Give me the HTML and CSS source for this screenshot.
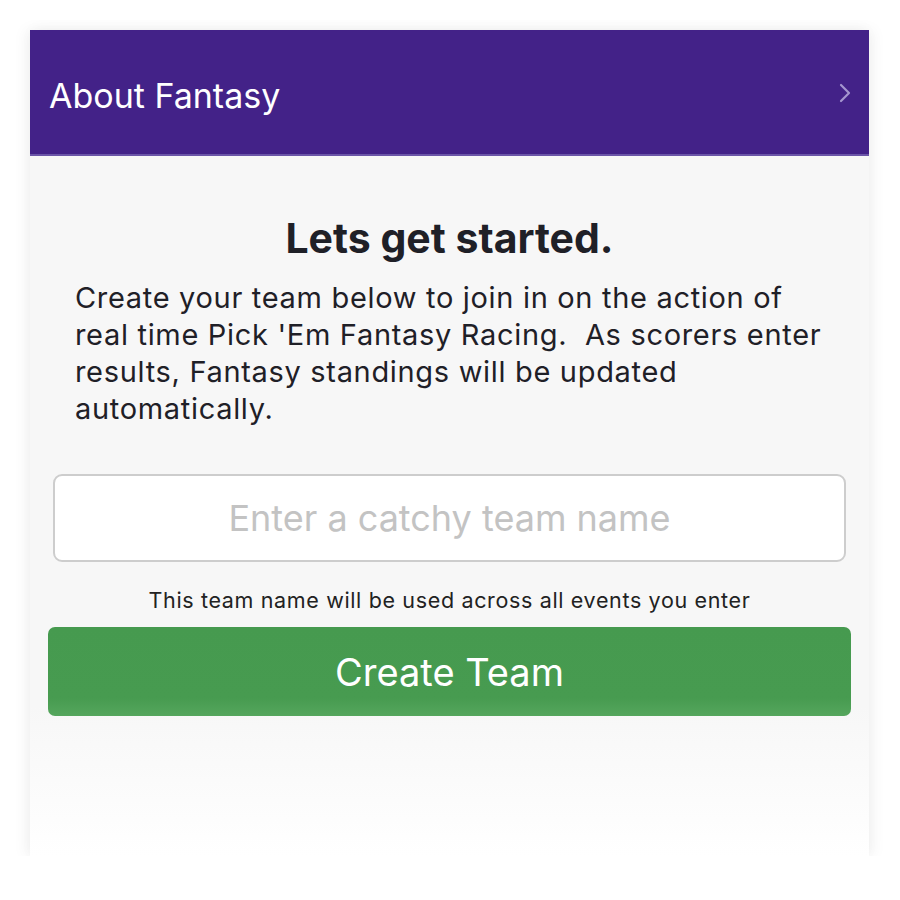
FILE: index.html
```html
<!DOCTYPE html>
<html lang="en">
<head>
	<meta charset="UTF-8">
	<title>About Fantasy</title>
	<link rel="stylesheet" href="styles.css">
</head>
<body>
	<div class="card">
		<div class="header">
			<span class="header-title">About Fantasy</span>
			<svg class="chevron" width="12" height="20" viewBox="0 0 12 20">
				<path d="M2 2 L10 10 L2 18" fill="none" stroke="#a596cf" stroke-width="2.2" stroke-linecap="round" stroke-linejoin="round"/>
			</svg>
		</div>
		<div class="content">
			<h1 class="title">Lets get started.</h1>
			<p class="intro">Create your team below to join in on the action of real time Pick 'Em Fantasy Racing.&nbsp; As scorers enter results, Fantasy standings will be updated automatically.</p>
			<div class="field">Enter a catchy team name</div>
			<p class="hint">This team name will be used across all events you enter</p>
			<div class="btn">Create Team</div>
		</div>
	</div>
</body>
</html>
```

FILE: styles.css
```css
* {
    padding: 0;
    margin: 0;
    box-sizing: border-box;
}

body {
    background: #fff;
    font-family: Inter, "Noto Sans", sans-serif;
    color: #1f2027;
}

.card {
    width: 839px;
    height: 826px;
    margin: 30px 0 0 30px;
    background: linear-gradient(#f7f7f7 0, #f7f7f7 82%, #fff 100%);
    box-shadow: -4px 0 14px rgba(0, 0, 0, 0.05), 4px 0 14px rgba(0, 0, 0, 0.05);
}

.header {
    height: 126px;
    background: #432288;
    border-bottom: 2px solid #6b55a8;
    display: flex;
    align-items: center;
    justify-content: space-between;
    padding: 6px 18px 0 19px;
}

.header-title {
    font-size: 34px;
    color: #fff;
}

.chevron {
    margin-bottom: 4px;
}

.content {
    padding: 57px 18px 0;
}

.title {
    font-size: 41px;
    font-weight: 700;
    text-align: center;
    line-height: 50px;
}

.intro {
    font-size: 29px;
    line-height: 37px;
    margin: 16px 21px 0 27px;
    letter-spacing: 0.68px;
}

.field {
    height: 88px;
    margin: 47px 5px 0;
    background: #fff;
    border: 2px solid #cdcdcd;
    border-radius: 9px;
    display: flex;
    align-items: center;
    justify-content: center;
    font-size: 36px;
    color: #c3c3c3;
}

.hint {
    font-size: 21.5px;
    text-align: center;
    margin-top: 25px;
    line-height: 26px;
    letter-spacing: 0.65px;
    color: #222;
}

.btn {
    height: 89px;
    margin-top: 14px;
    background: linear-gradient(#469a4f 0, #479b50 80%, #55a65d 100%);
    border-radius: 7px;
    display: flex;
    align-items: center;
    justify-content: center;
    font-size: 38px;
    color: #fff;
}
```
